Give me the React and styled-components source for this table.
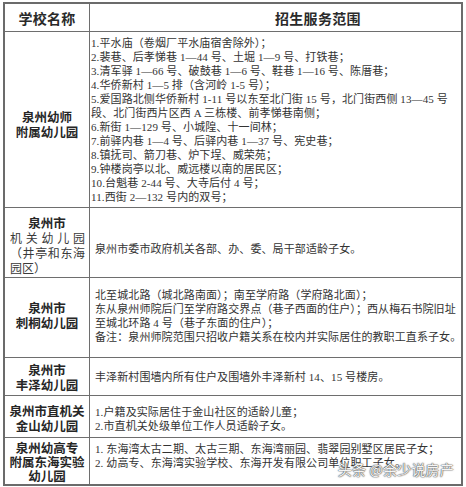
import React from "react";
import styled, { createGlobalStyle } from "styled-components";

const GlobalStyle = createGlobalStyle`
  html, body { margin: 0; padding: 0; background: #ffffff; }
  body { width: 466px; height: 487px; overflow: hidden; }
`;

const CJK = `"Liberation Serif", "Noto Sans CJK SC", serif`;
const CJK_BOLD = `"Noto Sans CJK SC", sans-serif`;

const Table = styled.div`
  position: relative;
  box-sizing: border-box;
  width: 460px;
  margin: 2px 0 0 3px;
  border: 2px solid #6b6b6b;
  background: #fff;
`;

const Row = styled.div`
  box-sizing: border-box;
  display: grid;
  grid-template-columns: 85px 1fr;
  height: ${(p) => p.$h}px;
  border-bottom: ${(p) => (p.$last ? "none" : "1px solid #6e6e6e")};
`;

const HeadCell = styled.div`
  box-sizing: border-box;
  display: flex;
  align-items: center;
  justify-content: ${(p) => (p.$left ? "flex-start" : "center")};
  padding-left: ${(p) => p.$pl || 0}px;
  border-right: ${(p) => (p.$divider ? "1px solid #6e6e6e" : "none")};
  font-family: ${CJK_BOLD};
  font-weight: 700;
  font-size: 14px;
  color: #2a2a2a;
  letter-spacing: 0.3px;
`;

const NameCell = styled.div`
  box-sizing: border-box;
  border-right: 1px solid #6e6e6e;
  padding-top: ${(p) => p.$pt}px;
  font-family: ${CJK_BOLD};
  font-size: 12.5px;
  line-height: ${(p) => p.$lh || 15}px;
  color: #262626;
`;

const NameLine = styled.div`
  text-align: center;
  font-weight: 700;
  white-space: nowrap;
`;

const PlainLine = styled.div`
  font-weight: 400;
  font-size: 12px;
  color: #3a3a3a;
  white-space: nowrap;
  padding: 0 4px 0 5px;
  text-align: ${(p) => (p.$justify ? "justify" : "left")};
  text-align-last: ${(p) => (p.$justify ? "justify" : "left")};
`;

const ScopeCell = styled.div`
  box-sizing: border-box;
  padding-top: ${(p) => p.$pt}px;
  padding-left: ${(p) => p.$pl}px;
  font-family: ${CJK};
  font-size: 11px;
  line-height: ${(p) => p.$lh || 14}px;
  letter-spacing: 0.1px;
  color: #333;
  overflow: hidden;
`;

const ScopeLine = styled.div`
  white-space: pre;
`;

const Watermark = styled.div`
  position: absolute;
  right: 7px;
  bottom: 7px;
  font-family: ${CJK_BOLD};
  font-size: 14px;
  line-height: 16px;
  color: rgba(255, 255, 255, 0.95);
  text-shadow: 0 0 1px #555, 0 0 1px #555, 0 0 2px #777;
  white-space: nowrap;
  letter-spacing: 0.2px;
`;

const rows = [
  {
    h: 176,
    name: { pt: 77, lh: 15, lines: [{ t: "泉州幼师" }, { t: "附属幼儿园" }] },
    scope: {
      pt: 4,
      pl: 1,
      lines: [
        "1.平水庙（卷烟厂平水庙宿舍除外）；",
        "2.裴巷、后孝悌巷 1—44 号、土堀 1—9 号、打铁巷；",
        "3.清军驿 1—66 号、破鼓巷 1—6 号、鞋巷 1—16 号、陈厝巷；",
        "4.华侨新村 1—5 排（含河岭 1-5 号）；",
        "5.爱国路北侧华侨新村 1-11 号以东至北门街 15 号，北门街西侧 13—45 号",
        "段、北门街西片区西 A 三栋楼、前孝悌巷南侧；",
        "6.新街 1—129 号、小城隍、十一间林；",
        "7.前驿内巷 1—4 号、后驿内巷 1—37 号、宪史巷；",
        "8.镇抚司、箭刀巷、炉下埕、威荣苑；",
        "9.钟楼岗亭以北、威远楼以南的居民区；",
        "10.台魁巷 2-44 号、大寺后付 4 号；",
        "11.西街 2—132 号内的双号；",
      ],
    },
  },
  {
    h: 70,
    name: {
      pt: 7,
      lh: 15,
      lines: [
        { t: "泉州市" },
        { t: "机关幼儿园", plain: true, justify: true },
        { t: "（井亭和东海", plain: true, justify: true },
        { t: "园区）", plain: true },
      ],
    },
    scope: { pt: 34, pl: 5, lines: ["泉州市委市政府机关各部、办、委、局干部适龄子女。"] },
  },
  {
    h: 80,
    name: { pt: 22, lh: 15, lines: [{ t: "泉州市" }, { t: "刺桐幼儿园" }] },
    scope: {
      pt: 10,
      pl: 5,
      lines: [
        "北至城北路（城北路南面）；南至学府路（学府路北面）；",
        "东从泉州师院后门至学府路交界点（巷子西面的住户）；西从梅石书院旧址",
        "至城北环路 4 号（巷子东面的住户）；",
        "备注：泉州师院范围只招收户籍关系在校内并实际居住的教职工直系子女。",
      ],
    },
  },
  {
    h: 38,
    name: { pt: 5, lh: 14.5, lines: [{ t: "泉州市" }, { t: "丰泽幼儿园" }] },
    scope: { pt: 12, pl: 5, lines: ["丰泽新村围墙内所有住户及围墙外丰泽新村 14、15 号楼房。"] },
  },
  {
    h: 42,
    name: { pt: 8, lh: 14.5, lines: [{ t: "泉州市直机关" }, { t: "金山幼儿园" }] },
    scope: {
      pt: 9,
      pl: 5,
      lines: ["1.户籍及实际居住于金山社区的适龄儿童；", "2.市直机关处级单位工作人员适龄子女。"],
    },
  },
  {
    h: 46,
    last: true,
    name: {
      pt: 3,
      lh: 14,
      lines: [{ t: "泉州幼高专" }, { t: "附属东海实验" }, { t: "幼儿园" }],
    },
    scope: {
      pt: 4,
      pl: 5,
      lines: [
        "1. 东海湾太古二期、太古三期、东海湾丽园、翡翠园别墅区居民子女；",
        "2. 幼高专、东海湾实验学校、东海开发有限公司单位职工子女。",
      ],
    },
  },
];

export default function App() {
  return (
    <>
      <GlobalStyle />
      <Table>
        <Row $h={28}>
          <HeadCell $divider>学校名称</HeadCell>
          <HeadCell $left $pl={185}>招生服务范围</HeadCell>
        </Row>
        {rows.map((r, i) => (
          <Row key={i} $h={r.h} $last={r.last}>
            <NameCell $pt={r.name.pt} $lh={r.name.lh}>
              {r.name.lines.map((l, j) =>
                l.plain ? (
                  <PlainLine key={j} $justify={l.justify}>
                    {l.t}
                  </PlainLine>
                ) : (
                  <NameLine key={j}>{l.t}</NameLine>
                )
              )}
            </NameCell>
            <ScopeCell $pt={r.scope.pt} $pl={r.scope.pl}>
              {r.scope.lines.map((l, j) => (
                <ScopeLine key={j}>{l}</ScopeLine>
              ))}
            </ScopeCell>
          </Row>
        ))}
        <Watermark>头条 @余少说房产</Watermark>
      </Table>
    </>
  );
}
